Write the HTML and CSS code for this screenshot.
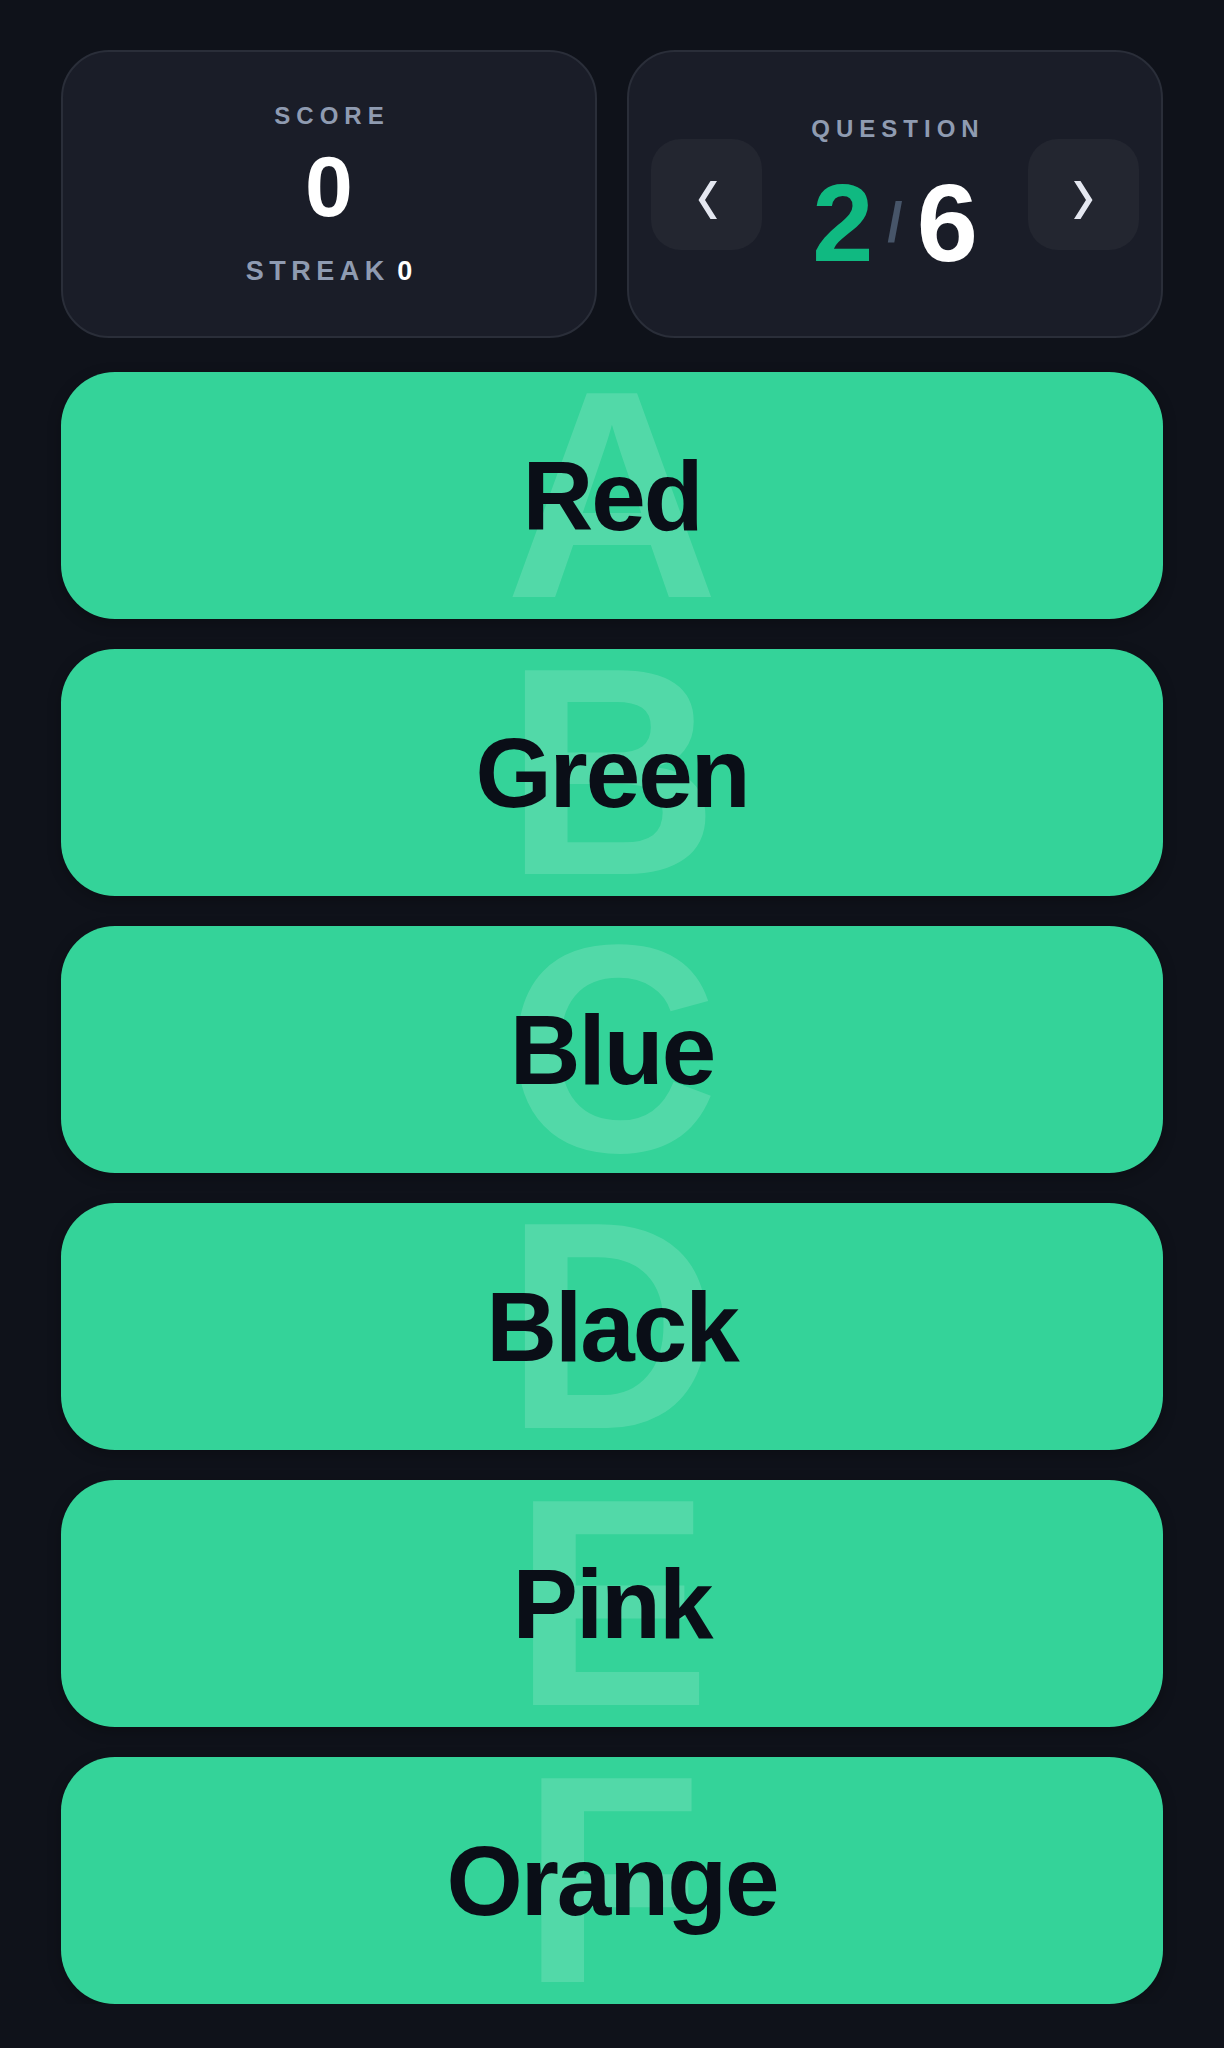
FILE: index.html
```html
<!DOCTYPE html>
<html lang="en">
<head>
<meta charset="utf-8">
<title>Quiz</title>
<link rel="stylesheet" href="styles.css">
</head>
<body>
<main class="quiz">
  <header class="top">
    <section class="card score-card">
      <div class="label score-label">SCORE</div>
      <div class="score-value">0</div>
      <div class="streak"><span class="streak-label">STREAK</span> <span class="streak-value">0</span></div>
    </section>
    <section class="card question-card">
      <button class="nav-btn" type="button" aria-label="Previous question">
        <svg class="chev" viewBox="0 0 20 38" width="20" height="38"><path d="M13.5 0 H20 L8 19 L20 38 H13.5 L1.5 19 Z" fill="#e4e7f0"/></svg>
      </button>
      <div class="q-center">
        <div class="label q-label">QUESTION</div>
        <div class="q-num"><span class="q-cur">2</span><span class="q-sep">/</span><span class="q-total">6</span></div>
      </div>
      <button class="nav-btn" type="button" aria-label="Next question">
        <svg class="chev" viewBox="0 0 20 38" width="20" height="38"><path d="M6.5 0 H0 L12 19 L0 38 H6.5 L18.5 19 Z" fill="#e4e7f0"/></svg>
      </button>
    </section>
  </header>
  <div class="answers">
    <button class="answer" type="button"><span class="ghost">A</span><span class="answer-text">Red</span></button>
    <button class="answer" type="button"><span class="ghost">B</span><span class="answer-text">Green</span></button>
    <button class="answer" type="button"><span class="ghost">C</span><span class="answer-text">Blue</span></button>
    <button class="answer" type="button"><span class="ghost">D</span><span class="answer-text">Black</span></button>
    <button class="answer" type="button"><span class="ghost">E</span><span class="answer-text">Pink</span></button>
    <button class="answer" type="button"><span class="ghost">F</span><span class="answer-text">Orange</span></button>
  </div>
</main>
</body>
</html>
```

FILE: styles.css
```css
html, body {
  margin: 0;
  padding: 0;
  background: #0f121a;
}
body {
  font-family: "Liberation Sans", Arial, Helvetica, sans-serif;
  color: #ffffff;
}
.quiz {
  width: 1102px;
  margin: 50px auto 0;
  display: flex;
  flex-direction: column;
  gap: 34px;
}
.top {
  display: grid;
  grid-template-columns: 1fr 1fr;
  gap: 30px;
}
.card {
  height: 288px;
  box-sizing: border-box;
  background: #1a1d28;
  border: 2px solid #2a2e39;
  border-radius: 48px;
}
.label {
  font-size: 24px;
  line-height: 1;
  font-weight: 700;
  letter-spacing: 6px;
  color: #8f9bb1;
  text-indent: 6px;
}
.score-card {
  display: flex;
  flex-direction: column;
  align-items: center;
  justify-content: center;
}
.score-label {
  margin-bottom: 15px;
}
.score-value {
  font-size: 86px;
  line-height: 1;
  font-weight: 700;
  color: #ffffff;
  margin-bottom: 29px;
}
.streak {
  font-size: 27px;
  line-height: 1;
  font-weight: 700;
}
.streak-label {
  color: #8f9bb1;
  letter-spacing: 5.5px;
}
.streak-value {
  color: #ffffff;
}
.question-card {
  display: flex;
  align-items: center;
  justify-content: space-between;
  padding: 0 22px;
}
.nav-btn {
  width: 111px;
  height: 111px;
  border: none;
  border-radius: 30px;
  background: #232630;
  display: flex;
  align-items: center;
  justify-content: center;
  padding: 12px 0 0;
  box-sizing: border-box;
  cursor: pointer;
}
.chev {
  display: block;
}
.q-center {
  display: flex;
  flex-direction: column;
  align-items: center;
  padding-top: 6px;
}
.q-label {
  margin-bottom: 27px;
}
.q-num {
  display: flex;
  align-items: center;
  font-weight: 700;
  line-height: 1;
}
.q-cur {
  font-size: 110px;
  color: #10b981;
}
.q-total {
  font-size: 110px;
  color: #ffffff;
}
.q-sep {
  font-size: 55px;
  color: #475569;
  margin: 0 14px;
}
.answers {
  display: flex;
  flex-direction: column;
  gap: 30px;
}
.answer {
  position: relative;
  height: 247px;
  border: none;
  border-radius: 54px;
  background: #34d399;
  display: flex;
  align-items: center;
  justify-content: center;
  overflow: hidden;
  padding: 0;
  font-family: "Liberation Sans", Arial, Helvetica, sans-serif;
  cursor: pointer;
  box-shadow: 0 4px 14px rgba(0, 0, 0, 0.25);
}
.ghost {
  position: absolute;
  inset: 0;
  display: flex;
  align-items: center;
  justify-content: center;
  font-size: 296px;
  line-height: 0.8;
  font-weight: 700;
  color: rgba(255, 255, 255, 0.15);
  pointer-events: none;
}
.answer-text {
  position: relative;
  font-size: 98px;
  line-height: 1;
  font-weight: 700;
  letter-spacing: -2px;
  color: #0a0e17;
}
```
